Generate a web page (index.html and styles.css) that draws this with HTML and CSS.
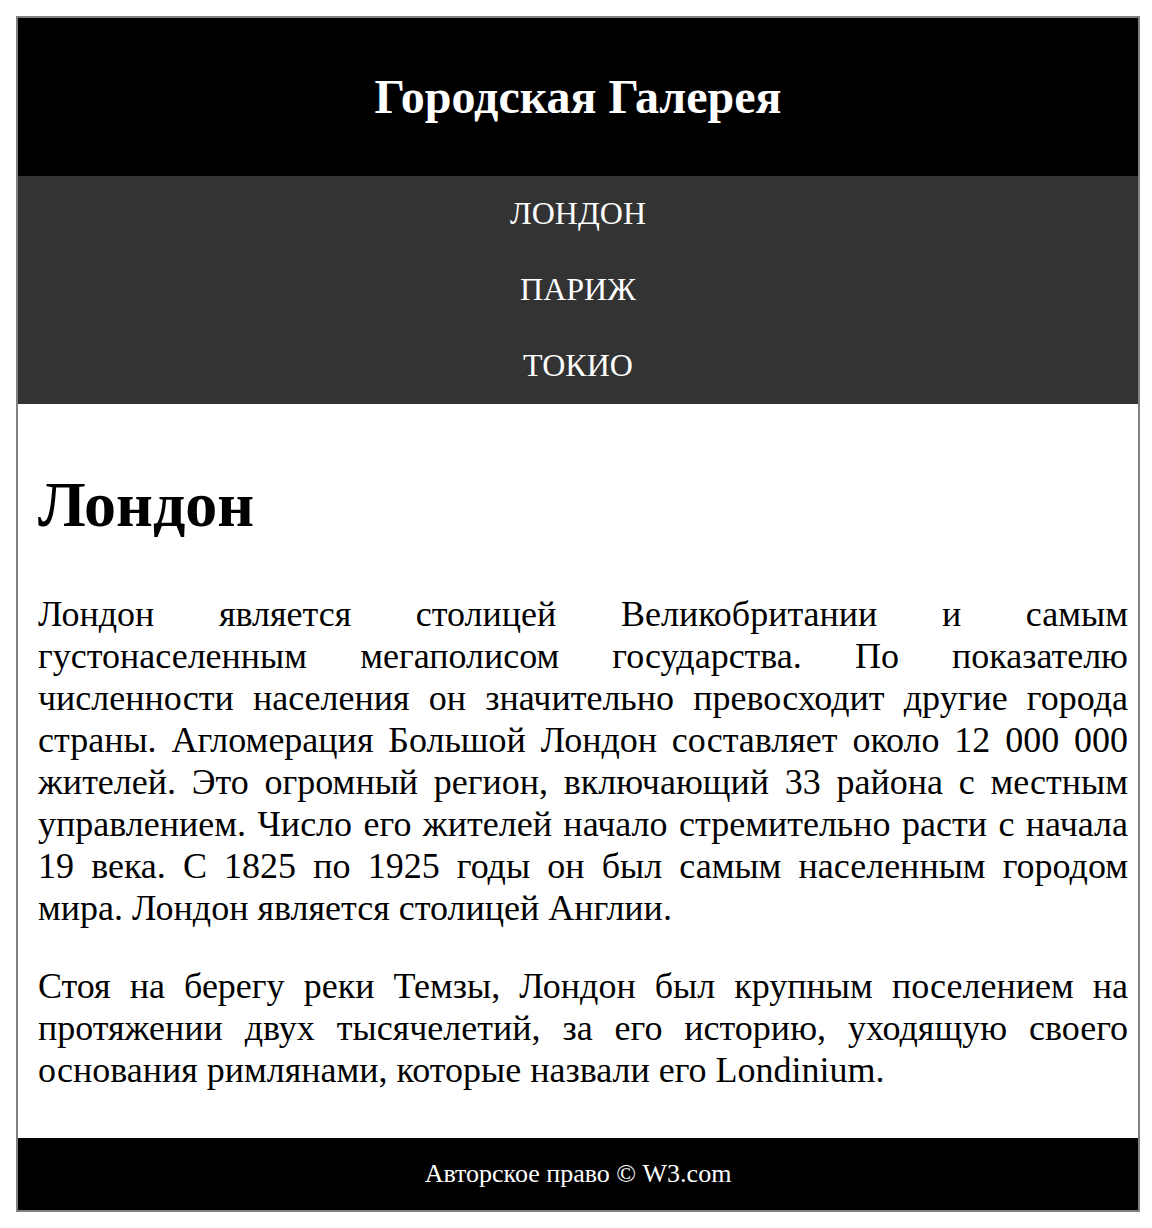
FILE: index.html
```html
<!DOCTYPE html>
<html lang="ru">
<head>
<meta charset="utf-8">
<title>Городская Галерея</title>
<link rel="stylesheet" href="styles.css">
</head>
<body>
<div class="container">
  <header class="site-header">
    <h1 class="site-title">Городская Галерея</h1>
  </header>
  <nav class="site-nav">
    <ul class="nav-list">
      <li class="nav-item">ЛОНДОН</li>
      <li class="nav-item">ПАРИЖ</li>
      <li class="nav-item">ТОКИО</li>
    </ul>
  </nav>
  <article class="article">
    <h1 class="article-title">Лондон</h1>
    <p class="article-text">Лондон является столицей Великобритании и самым густонаселенным мегаполисом государства. По показателю численности населения он значительно превосходит другие города страны. Агломерация Большой Лондон составляет около 12 000 000 жителей. Это огромный регион, включающий 33 района с местным управлением. Число его жителей начало стремительно расти с начала 19 века. С 1825 по 1925 годы он был самым населенным городом мира. Лондон является столицей Англии.</p>
    <p class="article-text">Стоя на берегу реки Темзы, Лондон был крупным поселением на протяжении двух тысячелетий, за его историю, уходящую своего основания римлянами, которые назвали его Londinium.</p>
  </article>
  <footer class="site-footer">Авторское право © W3.com</footer>
</div>
</body>
</html>
```
FILE: styles.css
```css
html, body {
  margin: 0;
  padding: 0;
  background: #fff;
}
body {
  padding: 16px 12px 16px 16px;
  font-family: "Liberation Serif", "Times New Roman", serif;
  color: #000;
}
.container {
  border: 2px solid #808080;
}
.site-header {
  background: #000;
  color: #fff;
  height: 158px;
  box-sizing: border-box;
  padding-bottom: 2px;
  display: flex;
  align-items: center;
  justify-content: center;
}
.site-title {
  margin: 0;
  font-size: 48px;
  font-weight: bold;
}
.site-nav {
  background: #333;
}
.nav-list {
  list-style: none;
  margin: 0;
  padding: 0;
}
.nav-item {
  height: 76px;
  box-sizing: border-box;
  padding-bottom: 2px;
  display: flex;
  align-items: center;
  justify-content: center;
  color: #fff;
  font-size: 32px;
}
.article {
  padding: 64px 10px 11px 20px;
}
.article-title {
  margin: 0 0 51px;
  font-size: 64px;
  line-height: 74px;
}
.article-text {
  margin: 36px 0;
  font-size: 36px;
  line-height: 42px;
  text-align: justify;
}
.site-footer {
  background: #000;
  color: #fff;
  height: 72px;
  display: flex;
  align-items: center;
  justify-content: center;
  font-size: 26px;
}
```
